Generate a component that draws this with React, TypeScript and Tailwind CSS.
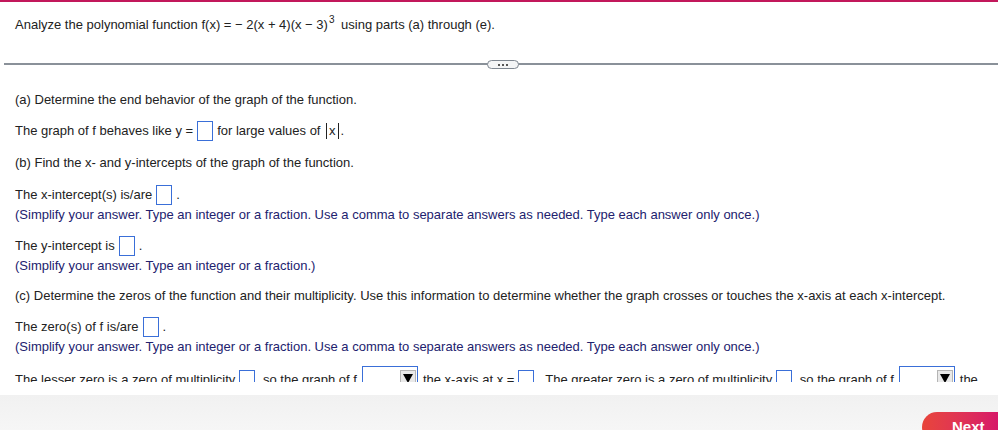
import React from "react";

const Box = ({ w = 16 }: { w?: number }) => (
  <span
    className="inline-block h-[20px] border border-[#3a6fd8] bg-white align-middle mx-[4px]"
    style={{ width: w }}
  />
);

const Drop = () => (
  <span className="inline-flex self-start h-[26px] w-[56px] border border-[#3a6fd8] bg-white mx-[5px] items-start justify-end pt-[3px] pr-[1px]">
    <span className="w-[16px] h-[18px] bg-[#e9e9e9] border border-[#b5b5b5] flex items-start justify-center pt-[3px]">
      <span className="w-0 h-0 border-l-[5px] border-r-[5px] border-t-[9px] border-l-transparent border-r-transparent border-t-black" />
    </span>
  </span>
);

export default function App() {
  return (
    <div
      className="relative w-[998px] h-[430px] overflow-hidden bg-white text-[13px] text-[#222]"
      style={{ fontFamily: '"Liberation Sans", Arial, sans-serif' }}
    >
      <div className="h-[2px] bg-[#c2185b]" />
      <div className="h-[380px] overflow-hidden">
        <div className="pl-[15px]">
          <div className="mt-[13px] h-[20px] flex items-center">
            <span>
              Analyze the polynomial function f(x) = − 2(x + 4)(x − 3)
              <sup className="text-[10px] relative -top-[6px] ml-[1px] mr-[3px]">3</sup> using parts (a) through (e).
            </span>
          </div>
        </div>
        <div className="relative mt-[24px] ml-[4px] h-[10px] flex items-center">
          <div className="w-full h-[1.5px] bg-[#8a9199]" />
          <div className="absolute left-[483px] top-[1px] w-[32px] h-[9px] rounded-full border border-[#7f8791] bg-[#f4f5f6] flex items-center justify-center gap-[2px]">
            <span className="w-[2px] h-[2px] bg-[#555]" />
            <span className="w-[2px] h-[2px] bg-[#555]" />
            <span className="w-[2px] h-[2px] bg-[#555]" />
          </div>
        </div>
        <div className="pl-[15px]">
          <div className="mt-[21px] h-[20px] flex items-center">(a) Determine the end behavior of the graph of the function.</div>
          <div className="mt-[11px] h-[20px] flex items-center whitespace-pre">
            The graph of f behaves like y =<Box />for large values of <span className="border-l border-r border-[#222] px-[2px] mx-[2px] leading-[16px]">x</span>.
          </div>
          <div className="mt-[12px] h-[20px] flex items-center">(b) Find the x- and y-intercepts of the graph of the function.</div>
          <div className="mt-[12px] h-[20px] flex items-center whitespace-pre">
            The x-intercept(s) is/are<Box />.
          </div>
          <div className="h-[20px] flex items-center text-[#22226e]">
            (Simplify your answer. Type an integer or a fraction. Use a comma to separate answers as needed. Type each answer only once.)
          </div>
          <div className="mt-[11px] h-[20px] flex items-center whitespace-pre">
            The y-intercept is<Box />.
          </div>
          <div className="h-[20px] flex items-center text-[#22226e]">(Simplify your answer. Type an integer or a fraction.)</div>
          <div className="mt-[10px] h-[20px] flex items-center">
            (c) Determine the zeros of the function and their multiplicity. Use this information to determine whether the graph crosses or touches the x-axis at each x-intercept.
          </div>
          <div className="mt-[11px] h-[20px] flex items-center whitespace-pre">
            The zero(s) of f is/are<Box />.
          </div>
          <div className="h-[20px] flex items-center text-[#22226e]">
            (Simplify your answer. Type an integer or a fraction. Use a comma to separate answers as needed. Type each answer only once.)
          </div>
          <div className="mt-[9px] h-[28px] flex items-center whitespace-pre">
            The lesser zero is a zero of multiplicity<Box /> so the graph of f<Drop />the x-axis at x =<Box />  The greater zero is a zero of multiplicity<Box /> so the graph of f<Drop />the
          </div>
        </div>
      </div>
      <div className="absolute left-0 right-0 bottom-0 h-[35px] bg-gradient-to-b from-[#f1f1f1] to-[#f6f6f6]">
        <div className="absolute left-[922px] top-[17px] w-[90px] h-[30px] rounded-tl-[16px] rounded-bl-[16px] bg-gradient-to-r from-[#e8453a] to-[#d4006e] pl-[30px] pt-[4px] text-white font-bold text-[15px]">
          Next
        </div>
      </div>
    </div>
  );
}
